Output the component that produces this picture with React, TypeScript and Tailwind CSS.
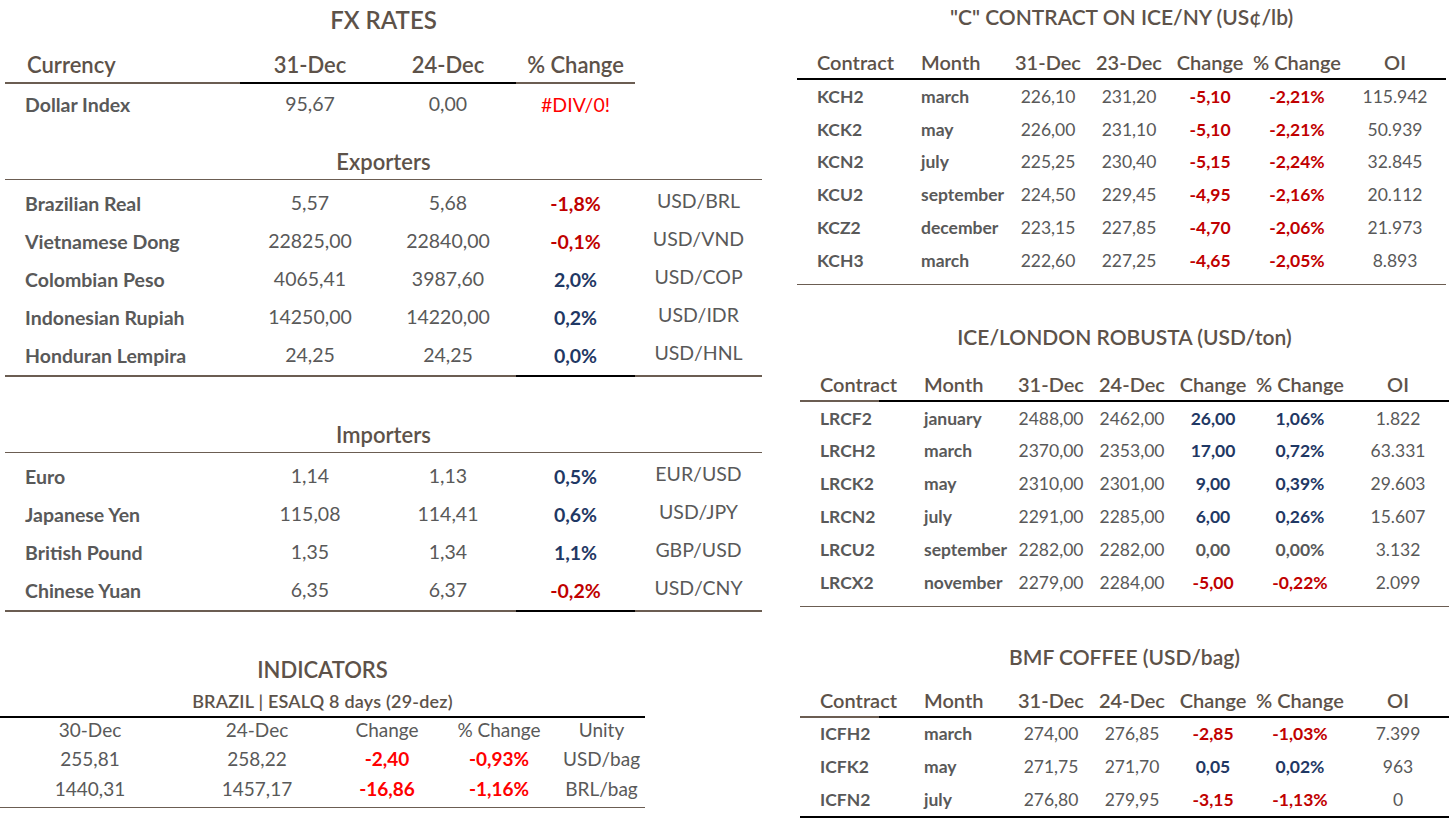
import React from 'react';

type Tone = 'red' | 'blue' | 'plain' | 'err';

interface FxRow {
    name: string;
    a: string;
    b: string;
    pct: string;
    tone: Tone;
    code: string;
}

interface Contract {
    code: string;
    month: string;
    a: string;
    b: string;
    chg: string;
    pct: string;
    tone: Tone;
    oi: string;
}

const exporters: FxRow[] = [
    { name: 'Brazilian Real', a: '5,57', b: '5,68', pct: '-1,8%', tone: 'red', code: 'USD/BRL' },
    { name: 'Vietnamese Dong', a: '22825,00', b: '22840,00', pct: '-0,1%', tone: 'red', code: 'USD/VND' },
    { name: 'Colombian Peso', a: '4065,41', b: '3987,60', pct: '2,0%', tone: 'blue', code: 'USD/COP' },
    { name: 'Indonesian Rupiah', a: '14250,00', b: '14220,00', pct: '0,2%', tone: 'blue', code: 'USD/IDR' },
    { name: 'Honduran Lempira', a: '24,25', b: '24,25', pct: '0,0%', tone: 'blue', code: 'USD/HNL' },
];

const importers: FxRow[] = [
    { name: 'Euro', a: '1,14', b: '1,13', pct: '0,5%', tone: 'blue', code: 'EUR/USD' },
    { name: 'Japanese Yen', a: '115,08', b: '114,41', pct: '0,6%', tone: 'blue', code: 'USD/JPY' },
    { name: 'British Pound', a: '1,35', b: '1,34', pct: '1,1%', tone: 'blue', code: 'GBP/USD' },
    { name: 'Chinese Yuan', a: '6,35', b: '6,37', pct: '-0,2%', tone: 'red', code: 'USD/CNY' },
];

const iceNy: Contract[] = [
    { code: 'KCH2', month: 'march', a: '226,10', b: '231,20', chg: '-5,10', pct: '-2,21%', tone: 'red', oi: '115.942' },
    { code: 'KCK2', month: 'may', a: '226,00', b: '231,10', chg: '-5,10', pct: '-2,21%', tone: 'red', oi: '50.939' },
    { code: 'KCN2', month: 'july', a: '225,25', b: '230,40', chg: '-5,15', pct: '-2,24%', tone: 'red', oi: '32.845' },
    { code: 'KCU2', month: 'september', a: '224,50', b: '229,45', chg: '-4,95', pct: '-2,16%', tone: 'red', oi: '20.112' },
    { code: 'KCZ2', month: 'december', a: '223,15', b: '227,85', chg: '-4,70', pct: '-2,06%', tone: 'red', oi: '21.973' },
    { code: 'KCH3', month: 'march', a: '222,60', b: '227,25', chg: '-4,65', pct: '-2,05%', tone: 'red', oi: '8.893' },
];

const london: Contract[] = [
    { code: 'LRCF2', month: 'january', a: '2488,00', b: '2462,00', chg: '26,00', pct: '1,06%', tone: 'blue', oi: '1.822' },
    { code: 'LRCH2', month: 'march', a: '2370,00', b: '2353,00', chg: '17,00', pct: '0,72%', tone: 'blue', oi: '63.331' },
    { code: 'LRCK2', month: 'may', a: '2310,00', b: '2301,00', chg: '9,00', pct: '0,39%', tone: 'blue', oi: '29.603' },
    { code: 'LRCN2', month: 'july', a: '2291,00', b: '2285,00', chg: '6,00', pct: '0,26%', tone: 'blue', oi: '15.607' },
    { code: 'LRCU2', month: 'september', a: '2282,00', b: '2282,00', chg: '0,00', pct: '0,00%', tone: 'plain', oi: '3.132' },
    { code: 'LRCX2', month: 'november', a: '2279,00', b: '2284,00', chg: '-5,00', pct: '-0,22%', tone: 'red', oi: '2.099' },
];

const bmf: Contract[] = [
    { code: 'ICFH2', month: 'march', a: '274,00', b: '276,85', chg: '-2,85', pct: '-1,03%', tone: 'red', oi: '7.399' },
    { code: 'ICFK2', month: 'may', a: '271,75', b: '271,70', chg: '0,05', pct: '0,02%', tone: 'blue', oi: '963' },
    { code: 'ICFN2', month: 'july', a: '276,80', b: '279,95', chg: '-3,15', pct: '-1,13%', tone: 'red', oi: '0' },
];

const toneClass = (t: Tone) =>
    t === 'red'
        ? 'font-bold text-[#c00000]'
        : t === 'blue'
        ? 'font-bold text-[#1f3864]'
        : t === 'err'
        ? 'text-[#ff0000]'
        : 'font-bold text-[#595959]';

const FX_COLS = 'grid grid-cols-[235px_140px_136px_119px_127px]';
const K_COLS = 'grid grid-cols-[104px_107px_80px_82px_80px_94px_102px]';

// thick split rule under the exporters / importers blocks
const SplitRule = () => (
    <div className="flex h-[2px]">
        <div className="w-[511px] bg-[#6b5d52]"></div>
        <div className="w-[119px] bg-black"></div>
        <div className="w-[127px] bg-[#6b5d52]"></div>
    </div>
);

const FxLine: React.FC<{ r: FxRow }> = ({ r }) => (
    <div className={`${FX_COLS} h-[38px] items-center text-[19.5px] text-[#595959]`}>
        <div className="pl-5 font-bold">{r.name}</div>
        <div className="text-center -mt-[3px]">{r.a}</div>
        <div className="text-center -mt-[3px]">{r.b}</div>
        <div className={`text-center ${toneClass(r.tone)}`}>{r.pct}</div>
        <div className="text-center -mt-[6px]">{r.code}</div>
    </div>
);

const FxGroup: React.FC<{ title: string; rows: FxRow[]; top: string }> = ({ title, rows, top }) => (
    <div>
        <div className={`${top} flex items-end justify-center border-b border-[#6b5d52] pb-[1px] text-[22px] font-semibold text-[#5d5249]`}>
            {title}
        </div>
        <div className="pt-[5px]">
            {rows.map((r) => (
                <FxLine key={r.name} r={r} />
            ))}
        </div>
        <SplitRule />
    </div>
);

const ContractTable: React.FC<{
    title: string;
    prev: string;
    rows: Contract[];
    top: string;
    head: string;
    brownHead: boolean;
    bottomBlack: boolean;
    pb: string;
}> = ({ title, prev, rows, top, head, brownHead, bottomBlack, pb }) => (
    <div>
        <div className={`${top} flex items-end justify-center text-[21px] font-semibold text-[#5d5249]`}>{title}</div>
        <div className={`${K_COLS} ${head} items-end pb-[1px] text-[20px] font-semibold text-[#5d5249]`}>
            <div className="pl-5">Contract</div>
            <div className="pl-5">Month</div>
            <div className="text-center">31-Dec</div>
            <div className="text-center">{prev}</div>
            <div className="text-center">Change</div>
            <div className="text-center whitespace-nowrap">% Change</div>
            <div className="text-center">OI</div>
        </div>
        <div className="flex h-[2px]">
            {brownHead ? <div className="w-[79px] bg-[#6b5d52]"></div> : null}
            <div className="flex-1 bg-black"></div>
        </div>
        <div className={pb}>
            {rows.map((r) => (
                <div key={r.code} className={`${K_COLS} h-[32.8px] items-center pt-[1px] text-[17.5px] text-[#595959]`}>
                    <div className="pl-5 font-bold">{r.code}</div>
                    <div className="pl-5 font-bold">{r.month}</div>
                    <div className="text-center">{r.a}</div>
                    <div className="text-center">{r.b}</div>
                    <div className={`text-center ${toneClass(r.tone)}`}>{r.chg}</div>
                    <div className={`text-center ${toneClass(r.tone)}`}>{r.pct}</div>
                    <div className="text-center">{r.oi}</div>
                </div>
            ))}
        </div>
        <div className={bottomBlack ? 'h-[2px] bg-black' : 'h-px bg-[#6b5d52]'}></div>
    </div>
);

export default function App() {
    return (
        <div className="flex h-[819px] w-[1449px] overflow-hidden bg-white font-['Lato','Liberation_Sans',sans-serif]">
            {/* Left: FX + indicators */}
            <div className="w-[762px]">
                <div className="pl-[5px]">
                    <div className="flex h-[40px] items-center justify-center text-[24px] font-semibold text-[#5d5249]">
                        FX RATES
                    </div>
                    <div className={`${FX_COLS} h-[44px] items-end text-[22px] font-semibold text-[#5d5249]`}>
                        <div className="border-b-2 border-[#6b5d52] pb-[1px] pl-[22px]">Currency</div>
                        <div className="border-b-2 border-black pb-[1px] text-center">31-Dec</div>
                        <div className="border-b-2 border-black pb-[1px] text-center">24-Dec</div>
                        <div className="border-b-2 border-[#6b5d52] pb-[1px] text-center">% Change</div>
                        <div></div>
                    </div>
                    <div className="pt-[2px]">
                        <FxLine r={{ name: 'Dollar Index', a: '95,67', b: '0,00', pct: '#DIV/0!', tone: 'err', code: '' }} />
                    </div>
                    <FxGroup title="Exporters" rows={exporters} top="h-[56px]" />
                    <FxGroup title="Importers" rows={importers} top="h-[76px]" />
                </div>

                <div className="w-[645px]">
                    <div className="flex h-[75px] items-end justify-center pb-[1px] text-[22px] font-semibold text-[#5d5249]">
                        INDICATORS
                    </div>
                    <div className="flex h-[29px] items-center justify-center text-[18px] font-semibold tracking-[0.2px] text-[#5d5249]">
                        BRAZIL | ESALQ 8 days (29-dez)
                    </div>
                    <div className="h-[2px] bg-black"></div>
                    <div className="grid grid-cols-[180px_154px_106px_118px_87px] text-[19px] text-[#595959] [&>div]:h-[29.5px] [&>div]:flex [&>div]:items-center [&>div]:justify-center [&>div]:pb-[6px]">
                        <div>30-Dec</div>
                        <div>24-Dec</div>
                        <div>Change</div>
                        <div>% Change</div>
                        <div>Unity</div>
                        <div>255,81</div>
                        <div>258,22</div>
                        <div className="font-bold text-[#ff0000]">-2,40</div>
                        <div className="font-bold text-[#ff0000]">-0,93%</div>
                        <div>USD/bag</div>
                        <div>1440,31</div>
                        <div>1457,17</div>
                        <div className="font-bold text-[#ff0000]">-16,86</div>
                        <div className="font-bold text-[#ff0000]">-1,16%</div>
                        <div>BRL/bag</div>
                    </div>
                    <div className="h-px bg-[#6b5d52]"></div>
                </div>
            </div>

            {/* Right: futures */}
            <div className="ml-[35px] w-[652px]">
                <div className="w-[649px]">
                    <ContractTable
                        title={'"C" CONTRACT ON ICE/NY (US¢/lb)'}
                        prev="23-Dec"
                        rows={iceNy}
                        top="h-[32px]"
                        head="h-[46px]"
                        brownHead={false}
                        bottomBlack={false}
                        pb="pb-[7px]"
                    />
                </div>
                <div className="pl-[3px]">
                    <ContractTable
                        title="ICE/LONDON ROBUSTA (USD/ton)"
                        prev="24-Dec"
                        rows={london}
                        top="h-[68px]"
                        head="h-[47px]"
                        brownHead={true}
                        bottomBlack={false}
                        pb="pb-[7px]"
                    />
                    <ContractTable
                        title="BMF COFFEE (USD/bag)"
                        prev="24-Dec"
                        rows={bmf}
                        top="h-[66px]"
                        head="h-[43px]"
                        brownHead={true}
                        bottomBlack={true}
                        pb="pb-[0px]"
                    />
                </div>
            </div>
        </div>
    );
}
